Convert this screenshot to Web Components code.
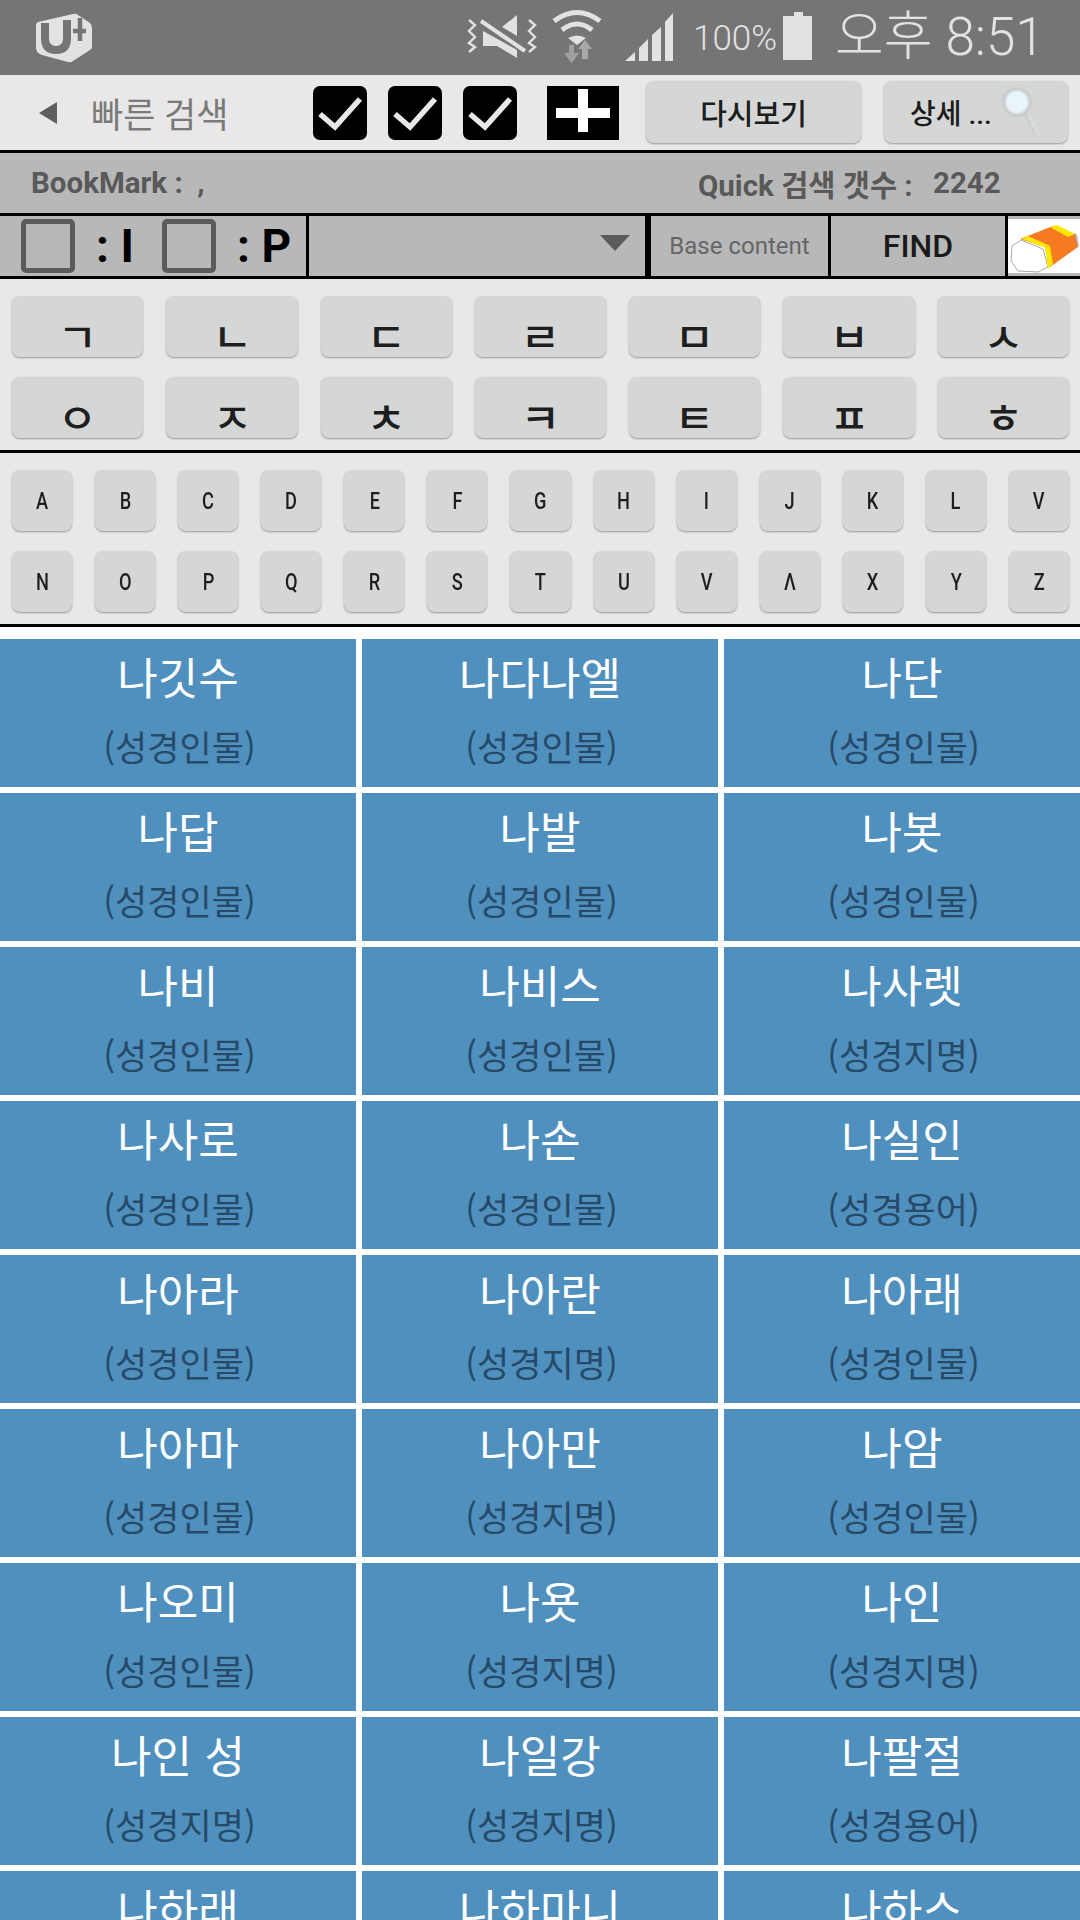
<!DOCTYPE html>
<html lang="ko"><head><meta charset="utf-8"><title>빠른 검색</title>
<style>
html,body{margin:0;padding:0;background:#fff}
body{width:1080px;height:1920px;overflow:hidden;font-family:Roboto,"Noto Sans CJK KR",sans-serif}
</style></head><body>
<status-bar></status-bar>
<app-bar></app-bar>
<info-row></info-row>
<filter-row></filter-row>
<key-pad kind="ko" keys="ㄱㄴㄷㄹㅁㅂㅅㅇㅈㅊㅋㅌㅍㅎ"></key-pad>
<key-pad kind="en" keys="ABCDEFGHIJKLVNOPQRSTUVΛXYZ"></key-pad>
<result-grid></result-grid>
<script>
const F='Roboto,"Noto Sans CJK KR",sans-serif';
class Base extends HTMLElement{
  render(html){this.attachShadow({mode:'open'}).innerHTML=html}
}
customElements.define('status-bar',class extends Base{connectedCallback(){this.render(`<style>
:host{display:flex;height:75px;background:#757575;color:#e2e2e2;font-family:${F};align-items:center;position:relative}
.logo{margin-left:35px;width:57px;height:50px;flex:none}
.mid{margin-left:368px;width:230px;height:75px;flex:none}
.pct{margin-left:3px;font-size:35px;font-weight:300;width:90px;flex:none;line-height:75px;position:relative;top:1px;white-space:nowrap}
.bat{width:29px;height:48px;flex:none;margin-top:-3px}
.time{margin-left:23px;font-size:53px;font-weight:300;line-height:75px;white-space:nowrap}
</style>
<svg class="logo" viewBox="0 0 57 50"><path fill="#e2e2e2" d="M3 9 L38 1 Q41 0 43 2 L55 10 Q57 12 57 15 L57 34 Q57 36 55 37 L38 48 Q36 50 33 49 L7 42 Q1 40 1 35 L1 12 Q1 10 3 9Z"/><path fill="none" stroke="#757575" stroke-width="8" d="M10 10 V25 Q10 37 21 37 Q32 37 32 25 V7"/><path fill="none" stroke="#757575" stroke-width="4.500" d="M38 18 H51 M45 5 V28"/></svg>
<svg class="mid" viewBox="0 0 230 75">
<g fill="none" stroke="#e2e2e2" stroke-width="2.4"><path d="M9 20 L15 25 L9 31 L15 37 L9 43 L15 47 L9 52"/><path d="M69 20 L75 25 L69 31 L75 37 L69 43 L75 47 L69 52"/></g>
<path fill="#e2e2e2" d="M23 31 L23 46 L37 46 L57 58 L57 50 L23 31Z M57 15 L42 27 L57 36Z"/>
<path stroke="#e2e2e2" stroke-width="4" d="M21 21 L65 51"/>
<g fill="none" stroke="#e2e2e2" stroke-width="5"><path d="M94 21 Q117 4 140 21"/><path d="M102 30 Q117 18 132 30"/></g>
<path fill="#e2e2e2" d="M117 45 L108 38 Q117 33 126 38Z"/>
<path fill="#a0a0a0" d="M109 45 H114 V53 H119 L111.500 63 L104 53 H109Z"/>
<path fill="#a8a8a8" d="M122 59 H128 V49 H132 L125 40 L118 49 H122Z"/>
<path fill="#e2e2e2" d="M165 61 L175 52 V61Z M179 61 V48 L188 39 V61Z M192 61 V35 L201 27 V61Z M205 61 V22 L213 13 V61Z"/>
</svg>
<span class="pct">100%</span>
<svg class="bat" viewBox="0 0 29 48"><path fill="#e2e2e2" d="M11 0 H20 V4 H29 V48 H0 V4 H11Z"/></svg>
<span class="time">오후 8:51</span>`)}});

customElements.define('ui-check',class extends Base{connectedCallback(){this.render(`<style>:host{display:block;width:54px;height:54px;flex:none}svg{display:block}</style>
<svg width="54" height="54"><rect width="54" height="54" rx="7" fill="#000"/><path d="M7 28 L22 41 L47 13" fill="none" stroke="#e8e8e8" stroke-width="5.500"/></svg>`)}});

customElements.define('ui-btn',class extends Base{connectedCallback(){this.render(`<style>
:host{display:flex;box-sizing:border-box;align-items:center;justify-content:center;background:#d5d7d6;border-radius:8px;box-shadow:0 1px 2px rgba(0,0,0,.35);color:#1c1c1c;font:500 28px ${F};flex:none}
</style><slot></slot>`)}});

customElements.define('app-bar',class extends Base{connectedCallback(){this.render(`<style>
:host{display:flex;height:75px;box-sizing:content-box;background:#e9e7e8;border-bottom:3px solid #000;align-items:center;font-family:${F}}
.tri{width:0;height:0;border:solid transparent;border-width:11px 18px 11px 0;border-right-color:#5e5e5e;margin-left:39px;flex:none;margin-top:1px}
.title{margin-left:34px;width:222px;flex:none;font-size:35px;color:#7a7a7a;white-space:nowrap}
.plus{margin-left:30px;width:72px;height:54px;background:#000;flex:none;display:block}
ui-btn{height:62px;margin-top:-1px}
.b1{margin-left:27px;width:215px;font-size:29px}
.b2{margin-left:23px;width:184px;justify-content:flex-start;padding-left:26px;gap:9px;white-space:nowrap}
.mag{width:38px;height:52px;flex:none}
.checks{display:flex;gap:21px;flex:none}
</style>
<span class="tri"></span><span class="title">빠른 검색</span>
<div class="checks"><ui-check></ui-check><ui-check></ui-check><ui-check></ui-check></div>
<svg class="plus" viewBox="0 0 72 54"><path fill="#fff" d="M9 22 H31 V3 H41 V22 H63 V32 H41 V46 H31 V32 H9Z"/></svg>
<ui-btn class="b1">다시보기</ui-btn>
<ui-btn class="b2">상세 ...<svg class="mag" viewBox="0 0 38 52"><defs><filter id="b" x="-20%" y="-20%" width="140%" height="140%"><feGaussianBlur stdDeviation=".8"/></filter></defs><g filter="url(#b)"><circle cx="16" cy="16" r="13" fill="#eaf4fb" stroke="#c4c8c8" stroke-width="3"/><path d="M25 28 L36 49" stroke="#b3b7b7" stroke-width="3" stroke-dasharray="5 2"/><path d="M26 28 L37 49" stroke="#eeeeee" stroke-width="1.400"/></g></svg></ui-btn>`)}});

customElements.define('info-row',class extends Base{connectedCallback(){this.render(`<style>
:host{display:flex;height:60px;background:#b8b8b8;border-bottom:3px solid #000;align-items:center;font:700 29.500px ${F};color:#595959;white-space:pre}
.a{margin-left:31px;width:667px;flex:none}
.b{width:235px;flex:none}
</style><span class="a">BookMark :  ,</span><span class="b">Quick 검색 갯수 :</span><span>2242</span>`)}});

customElements.define('filter-row',class extends Base{connectedCallback(){this.render(`<style>
:host{display:flex;height:60px;background:#b8b8b8;border-bottom:3px solid #000;font-family:${F}}
.c{box-sizing:border-box;height:60px;border-right:3px solid #000;flex:none;display:flex;align-items:center}
.c1{width:309px;padding-left:21px}
.c2{width:342px;border-right-width:6px;justify-content:flex-end;padding-right:15px}
.c3{width:180px;justify-content:center;font-size:24px;color:#666}
.c4{width:177px;justify-content:center;font-size:32px;font-weight:500;color:#1a1a1a}
.e{width:72px;height:54px;background:#fff;margin-top:3px;flex:none;display:block}
.box{width:54px;height:54px;box-sizing:border-box;border:5px solid #5b5b5b;border-radius:5px;flex:none}
.lab{font-size:46px;font-weight:700;color:#000;line-height:54px;width:87px;flex:none;padding-left:21px;box-sizing:border-box;white-space:pre}
.lab2{width:73px}
.arrow{width:0;height:0;border:solid transparent;border-width:16px 15px 0;border-top-color:#5b5b5b;margin-top:-6px}
</style>
<div class="c c1"><span class="box"></span><span class="lab">: I</span><span class="box"></span><span class="lab lab2">: P</span></div>
<div class="c c2"><span class="arrow"></span></div>
<div class="c c3">Base content</div>
<div class="c c4">FIND</div>
<svg class="e" viewBox="0 0 72 54"><path fill="#fff" stroke="#a8a8a8" stroke-width="1" d="M4 27 L13 21 L35 30 L40 48 L30 53 L10 52 L3 42Z"/><path fill="#f57a22" d="M12 20 L45 7 L67 15 L70 28 L42 48 L37 28Z"/><path fill="#ffe800" d="M14 20 L20 17 L42 27 L35 28Z M42 8 L49 6 L67 15 L60 18Z M37 28 L42 27 L45 45 L40 50Z"/><path fill="#a88" d="M66 14 L69 15 L71 27 L69 29Z" opacity=".6"/></svg>`)}});

customElements.define('key-pad',class extends Base{connectedCallback(){
  const ko=this.getAttribute('kind')==='ko',keys=[...this.getAttribute('keys')],n=ko?7:13;
  this.render(`<style>
:host{display:grid;grid-template-columns:repeat(${n},1fr);row-gap:20px;padding:17px 0 12px;background:#e9e7e8;border-bottom:3px solid #000;font-family:${F}}
ui-btn{height:61px;margin:0 11px 0 12px;color:#1e1e1e}
.ko{font:500 40px "Noto Sans CJK KR",sans-serif;display:inline-block;transform:translateY(8px) scale(1.08,1);line-height:1}
.en{display:inline-block;text-align:center;font:500 24px ${F};line-height:28px;transform:scaleX(.76)}
</style>${keys.map(k=>`<ui-btn>${ko?`<span class="ko">${k}</span>`:`<span class="en">${k}</span>`}</ui-btn>`).join('')}`)}});

customElements.define('result-cell',class extends Base{connectedCallback(){this.render(`<style>
:host{display:flex;flex-direction:column;align-items:center;height:148px;background:#5090be;font-family:"Noto Sans CJK KR",sans-serif}
.n{font-size:44px;color:#fff;line-height:50px;margin-top:12px;white-space:pre}
.s{font-size:35px;color:#264a68;line-height:46px;margin-top:22px;padding-left:3px}
</style><span class="n">${this.getAttribute('n')}</span><span class="s">(${this.getAttribute('s')})</span>`)}});

customElements.define('result-grid',class extends Base{connectedCallback(){
  const I='성경인물',P='성경지명',T='성경용어';
  const d=[['나깃수',I],['나다나엘',I],['나단',I],['나답',I],['나발',I],['나봇',I],['나비',I],['나비스',I],['나사렛',P],['나사로',I],['나손',I],['나실인',T],['나아라',I],['나아란',P],['나아래',I],['나아마',I],['나아만',P],['나암',I],['나오미',I],['나욧',P],['나인',P],['나인 성',P],['나일강',P],['나팔절',T],['나하래',I],['나하마니',I],['나하스',I]];
  this.render(`<style>:host{display:grid;grid-template-columns:repeat(3,1fr);gap:6px;padding-top:12px;background:#fff}</style>${d.map(x=>`<result-cell n="${x[0]}" s="${x[1]}"></result-cell>`).join('')}`)}});
</script>
</body></html>
